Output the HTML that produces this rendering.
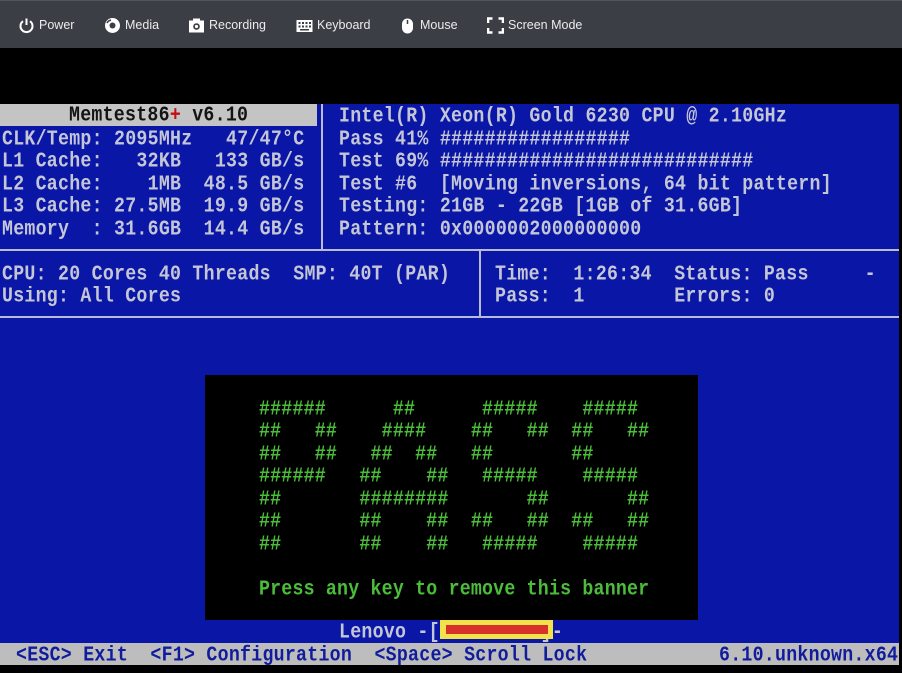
<!DOCTYPE html>
<html><head><meta charset="utf-8"><style>
*{margin:0;padding:0;box-sizing:border-box}
body{width:902px;height:673px;background:#000;position:relative;overflow:hidden;font-family:"Liberation Sans",sans-serif}
#tb{position:absolute;left:0;top:0;width:902px;height:48px;background:#3b3e45;border-top:1px solid #555}
.ti{position:absolute;top:16px;height:17px;color:#ececec;font-size:12.5px;line-height:17px}
.ti svg{position:absolute;left:0;top:0}
#blue{position:absolute;left:0;top:104px;width:899px;height:539px;background:#0a17a6}
.t{position:absolute;height:22.5px;margin-top:2px;white-space:pre;font:bold 18.25px/22.5px "Liberation Mono",monospace;letter-spacing:0.25px;color:#c4c6d6;transform:scaleY(1.15);transform-origin:0 50%}
.hl{position:absolute;background:#b8bcd8;height:2px;left:0;width:899px}
.vl{position:absolute;background:#b8bcd8;width:2px}
.g{color:#4bbd3a}
</style></head><body>
<div id="tb">
 <div class="ti" style="left:18px;padding-left:21px"><svg width="17" height="17" viewBox="0 0 17 17"><path d="M5 4.2A6 6 0 1 0 12 4.2" fill="none" stroke="#fff" stroke-width="2"/><path d="M8.5 1.5V8" stroke="#fff" stroke-width="2"/></svg>Power</div>
 <div class="ti" style="left:104px;padding-left:21px"><svg width="17" height="17" viewBox="0 0 17 17"><circle cx="8.5" cy="8.5" r="7.5" fill="#fff"/><circle cx="8.5" cy="8.5" r="3" fill="#3b3e45"/><path d="M3 6A6 6 0 0 1 7 3" stroke="#3b3e45" stroke-width="1.5" fill="none"/></svg>Media</div>
 <div class="ti" style="left:188px;padding-left:21px"><svg width="17" height="17" viewBox="0 0 17 17"><rect x="1" y="3.5" width="15" height="12" fill="#fff"/><rect x="5" y="1.5" width="7" height="3" fill="#fff"/><circle cx="8.5" cy="9.5" r="3.3" fill="#3b3e45"/><circle cx="8.5" cy="9.5" r="1.6" fill="#fff"/></svg>Recording</div>
 <div class="ti" style="left:296px;padding-left:21px"><svg width="17" height="17" viewBox="0 0 17 17"><rect x="0.5" y="3" width="16" height="12" fill="#fff"/><g fill="#3b3e45"><rect x="2.5" y="5" width="2" height="2"/><rect x="6" y="5" width="2" height="2"/><rect x="9.5" y="5" width="2" height="2"/><rect x="13" y="5" width="2" height="2"/><rect x="2.5" y="8.5" width="2" height="2"/><rect x="6" y="8.5" width="2" height="2"/><rect x="9.5" y="8.5" width="2" height="2"/><rect x="13" y="8.5" width="2" height="2"/><rect x="4" y="12" width="9" height="1.5"/></g></svg>Keyboard</div>
 <div class="ti" style="left:401px;padding-left:19px"><svg width="17" height="17" viewBox="0 0 17 17"><rect x="1" y="1.5" width="11" height="15" rx="5.5" fill="#fff"/><path d="M6.5 3V7" stroke="#3b3e45" stroke-width="1.5"/></svg>Mouse</div>
 <div class="ti" style="left:487px;padding-left:21px"><svg width="17" height="17" viewBox="0 0 17 17"><path d="M1 6V1.5H5.5M11.5 1.5H16V6M16 11V15.5H11.5M5.5 15.5H1V11" fill="none" stroke="#fff" stroke-width="2.6"/></svg>Screen Mode</div>
</div>
<div id="blue"></div>
<div style="position:absolute;left:0;top:104px;width:317px;height:22px;background:#c4c4c4"></div>
<div class="vl" style="left:321px;top:104px;height:146px"></div>
<div class="hl" style="top:249px"></div>
<div class="vl" style="left:479px;top:250px;height:67px"></div>
<div class="hl" style="top:316px"></div>

<div class="t" style="left:69px;top:103px;color:#141414">Memtest86<span style="color:#c01010">+</span> v6.10</div>
<div class="t" style="left:2px;top:126.5px">CLK/Temp: 2095MHz   47/47°C</div>
<div class="t" style="left:2px;top:149px">L1 Cache:   32KB   133 GB/s</div>
<div class="t" style="left:2px;top:171.5px">L2 Cache:    1MB  48.5 GB/s</div>
<div class="t" style="left:2px;top:194px">L3 Cache: 27.5MB  19.9 GB/s</div>
<div class="t" style="left:2px;top:216.5px">Memory  : 31.6GB  14.4 GB/s</div>

<div class="t" style="left:339px;top:104px">Intel(R) Xeon(R) Gold 6230 CPU @ 2.10GHz</div>
<div class="t" style="left:339px;top:126.5px">Pass 41% #################</div>
<div class="t" style="left:339px;top:149px">Test 69% ############################</div>
<div class="t" style="left:339px;top:171.5px">Test #6  [Moving inversions, 64 bit pattern]</div>
<div class="t" style="left:339px;top:194px">Testing: 21GB - 22GB [1GB of 31.6GB]</div>
<div class="t" style="left:339px;top:216.5px">Pattern: 0x0000002000000000</div>

<div class="t" style="left:2px;top:261.5px">CPU: 20 Cores 40 Threads  SMP: 40T (PAR)</div>
<div class="t" style="left:2px;top:284px">Using: All Cores</div>
<div class="t" style="left:495px;top:261.5px">Time:  1:26:34  Status: Pass     -</div>
<div class="t" style="left:495px;top:284px">Pass:  1        Errors: 0</div>

<div style="position:absolute;left:205px;top:375px;width:493px;height:245px;background:#000"></div>
<div class="t g" style="left:259px;top:396.5px;letter-spacing:0.2px">######      ##      #####    #####</div>
<div class="t g" style="left:259px;top:419px;letter-spacing:0.2px">##   ##    ####    ##   ##  ##   ##</div>
<div class="t g" style="left:259px;top:441.5px;letter-spacing:0.2px">##   ##   ##  ##   ##       ##</div>
<div class="t g" style="left:259px;top:464px;letter-spacing:0.2px">######   ##    ##   #####    #####</div>
<div class="t g" style="left:259px;top:486.5px;letter-spacing:0.2px">##       ########       ##       ##</div>
<div class="t g" style="left:259px;top:509px;letter-spacing:0.2px">##       ##    ##  ##   ##  ##   ##</div>
<div class="t g" style="left:259px;top:531.5px;letter-spacing:0.2px">##       ##    ##   #####    #####</div>
<div class="t g" style="left:259px;top:576.5px;letter-spacing:0.2px">Press any key to remove this banner</div>

<div class="t" style="left:339px;top:620px">Lenovo -[         ]-</div>
<div style="position:absolute;left:440px;top:620px;width:113px;height:19px;background:#f4e24a"></div>
<div style="position:absolute;left:446px;top:625px;width:102px;height:9px;background:#d8302a"></div>

<div style="position:absolute;left:0;top:643px;width:899px;height:22px;background:#bdbdbd"></div>
<div class="t" style="left:16px;top:642.5px;color:#101c9c">&lt;ESC&gt; Exit  &lt;F1&gt; Configuration  &lt;Space&gt; Scroll Lock</div>
<div class="t" style="left:719px;top:642.5px;color:#101c9c">6.10.unknown.x64</div>
</body></html>
